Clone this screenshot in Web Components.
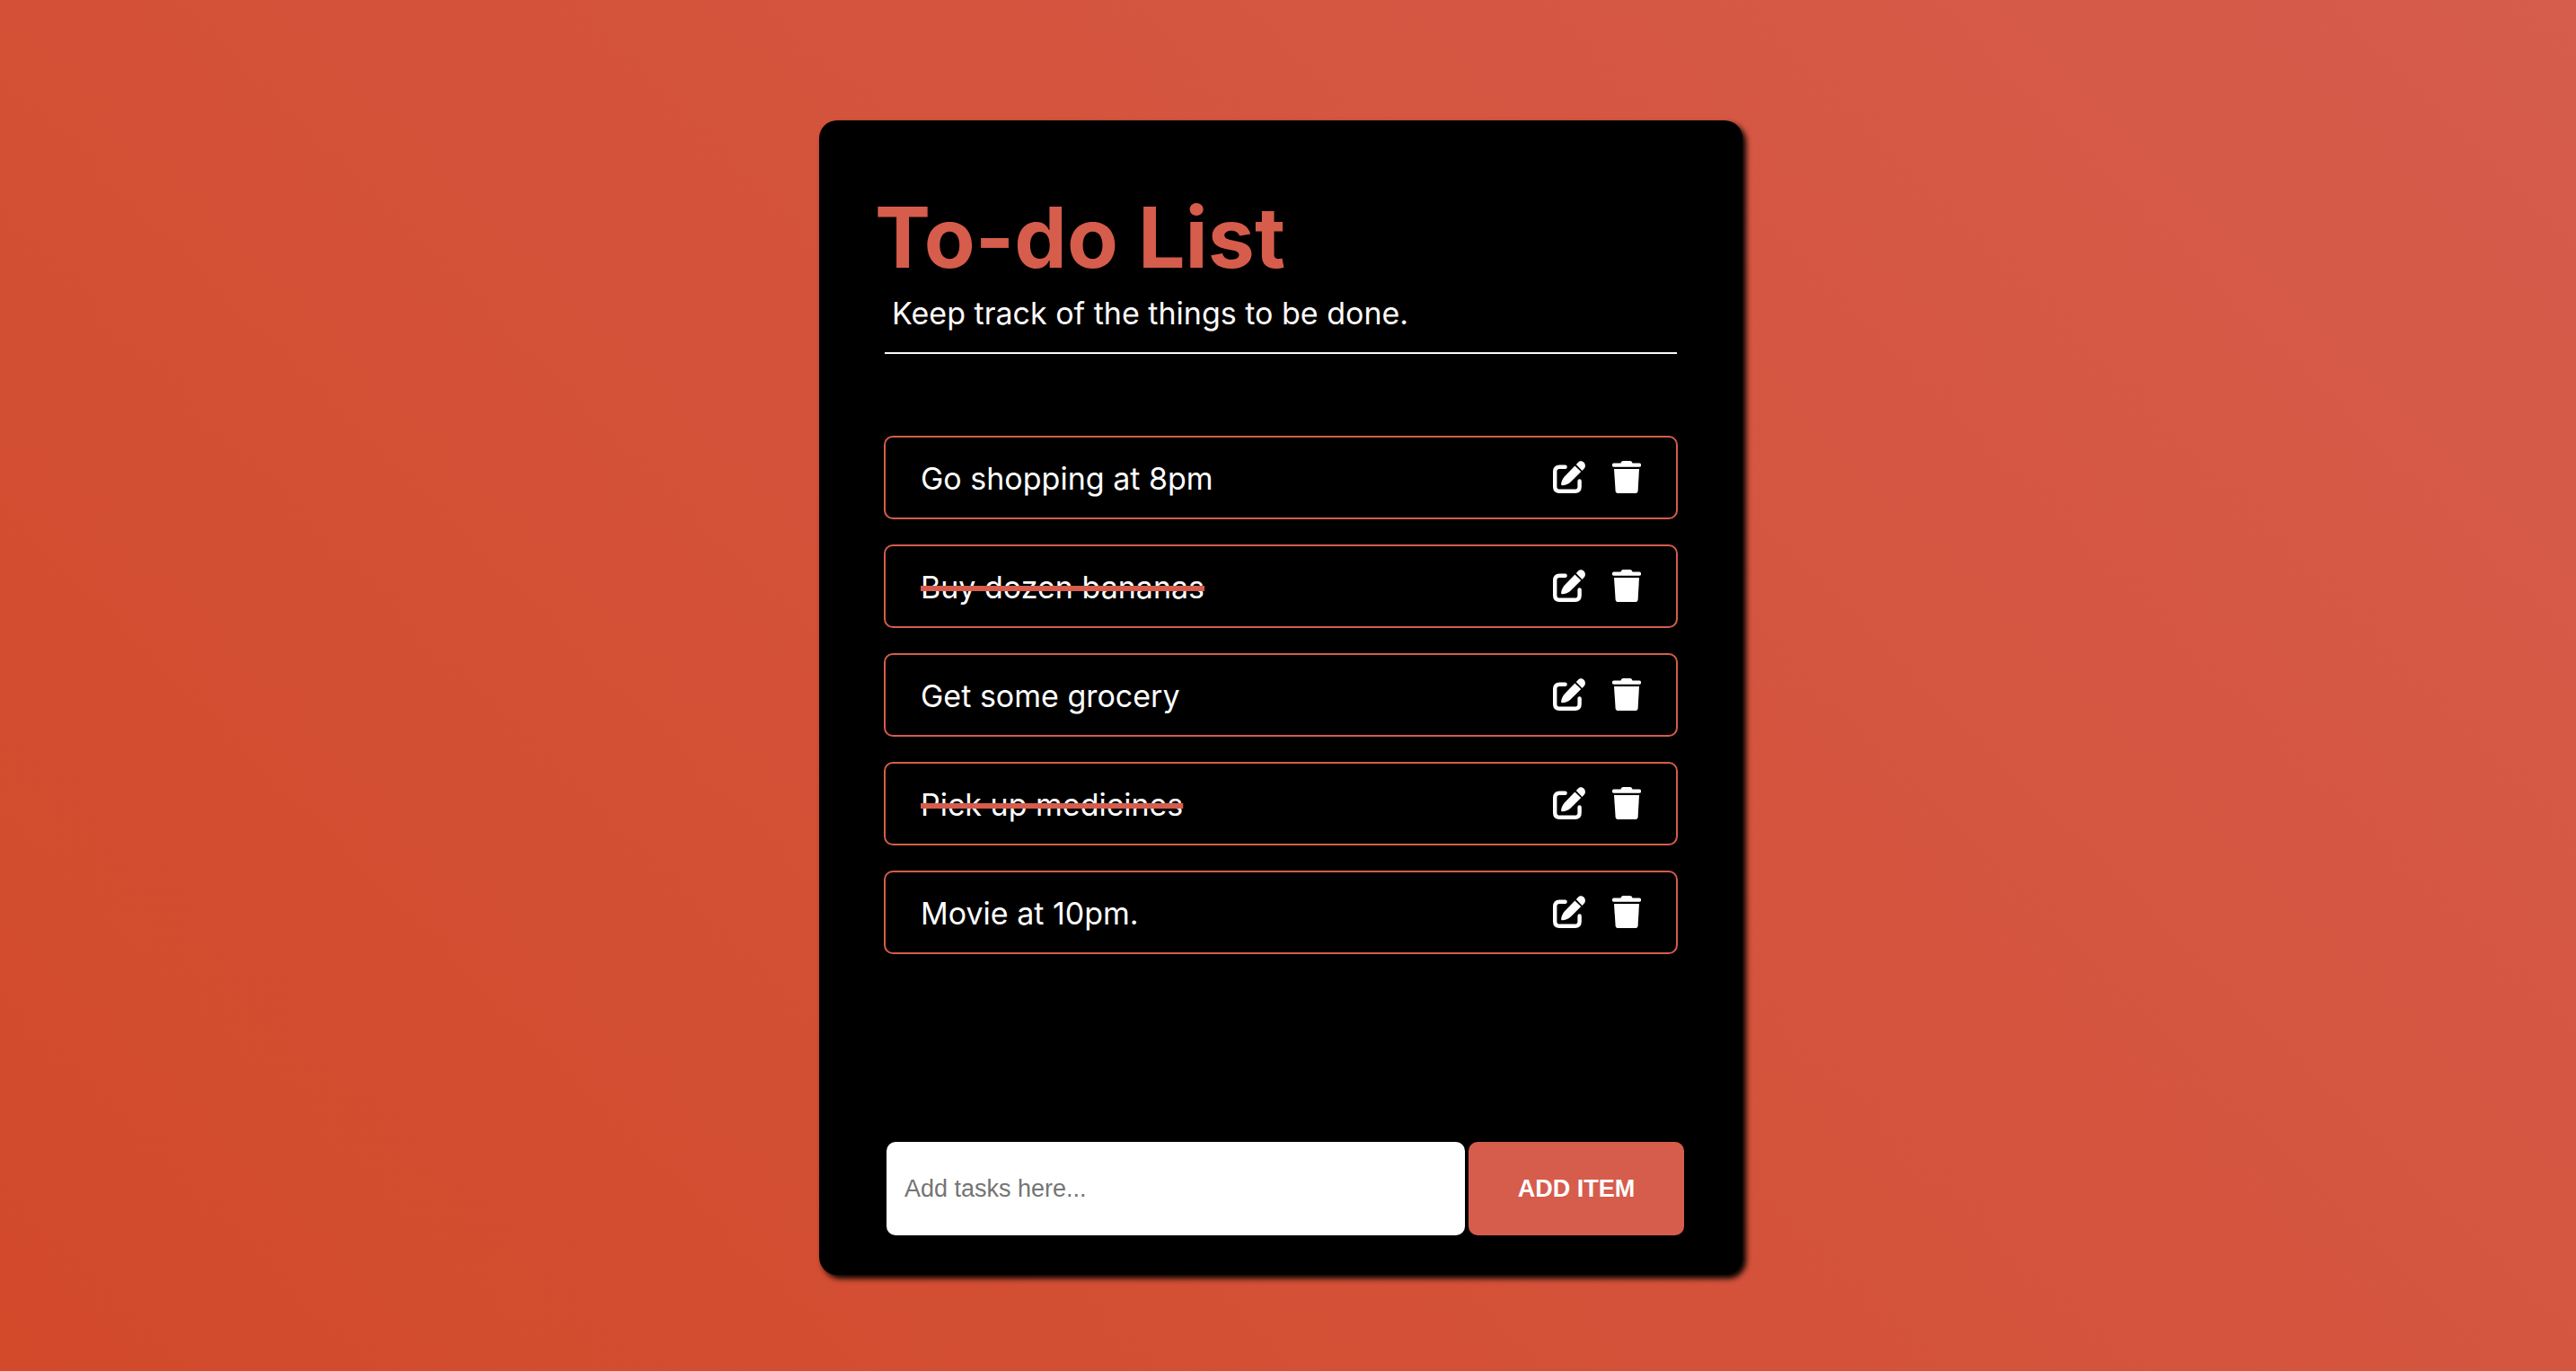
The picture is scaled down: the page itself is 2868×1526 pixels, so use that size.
<!DOCTYPE html>
<html lang="en">
<head>
<meta charset="utf-8">
<title>To-do List</title>
<style>
  html { height: 100%; }
  body {
    margin: 0;
    min-height: 100%;
    box-sizing: border-box;
    padding: 134px 16px 104px 0;
    background: linear-gradient(45deg, #d24a2a, #d65c4c);
    font-family: Inter, "Liberation Sans", sans-serif;
    --accent: #d65c4c;
    --light: #fffafa;
    --radius: 10px;
  }
</style>
</head>
<body>
<todo-card>
  <todo-header slot="header">
    <span slot="title">To-do List</span>
    <span slot="subtitle">Keep track of the things to be done.</span>
  </todo-header>
  <todo-item>Go shopping at 8pm</todo-item>
  <todo-item done>Buy dozen bananas</todo-item>
  <todo-item>Get some grocery</todo-item>
  <todo-item done>Pick up medicines</todo-item>
  <todo-item>Movie at 10pm.</todo-item>
  <todo-form slot="footer"></todo-form>
</todo-card>
<script>
const define = (name, html) => {
  const template = document.createElement('template');
  template.innerHTML = html;
  customElements.define(name, class extends HTMLElement {
    constructor() {
      super();
      this.attachShadow({ mode: 'open' }).append(template.content.cloneNode(true));
    }
  });
};

define('todo-card', `
  <style>
    :host {
      display: flex; flex-direction: column; box-sizing: border-box;
      max-width: 1028px; margin: 0 auto; padding: 72px 62px 44px;
      background: #000; border-radius: 20px;
      box-shadow: 4px 4px 6px #000;
    }
    .list { display: flex; flex-direction: column; gap: 28px; margin: 91px 10px 209px; }
  </style>
  <slot name="header"></slot>
  <div class="list" role="list"><slot></slot></div>
  <slot name="footer"></slot>
`);

define('todo-header', `
  <style>
    :host { display: block; }
    h1 { margin: 0; font-size: 93px; line-height: 116px; font-weight: 700; color: var(--accent); }
    p { margin: 0 11px; padding: 2px 8px 18px; font-size: 34px; line-height: 50px; color: var(--light); border-bottom: 2px solid var(--light); }
  </style>
  <h1><slot name="title"></slot></h1>
  <p><slot name="subtitle"></slot></p>
`);

define('todo-item', `
  <style>
    :host {
      display: flex; align-items: center; gap: 30px; box-sizing: border-box;
      min-height: 93px; padding: 0 39px;
      border: 2px solid var(--accent); border-radius: var(--radius);
      color: #fff; font-size: 34px; line-height: 48px;
    }
    .text { flex: 1; padding-top: 2px; }
    :host([done]) .text span { text-decoration: line-through 6px var(--accent); }
    button { display: flex; margin: 0; padding: 0 0 2px; border: 0; background: none; color: inherit; cursor: pointer; }
    svg { display: block; fill: currentColor; }
  </style>
  <div class="text"><span><slot></slot></span></div>
  <button type="button" aria-label="Edit">
    <svg width="36" height="36" viewBox="0 0 36 36">
      <path d="M13.6 6.8H7.2Q2.2 6.8 2.2 11.8V28.8Q2.2 33.8 7.2 33.8H24.6Q29.6 33.8 29.6 28.8V22.4" fill="none" stroke="currentColor" stroke-width="4.4" stroke-linecap="round"/>
      <path d="M9.3 27C8.6 25 10.4 20.4 12.8 17.6L24.4 5.4L31.2 12L19.4 23.8C16.4 26.4 11.6 27.8 9.3 27Z"/>
      <path d="M25.8 3.9L28 1.8C30 -.5 32.8 0 34.6 1.8C36.4 4 36.4 6.8 34.6 8.8L32.5 10.9Z"/>
    </svg>
  </button>
  <button type="button" aria-label="Delete">
    <svg width="32" height="36" viewBox="0 0 32 36">
      <path d="M9.5 2.5Q9.8 0 12 0H20Q22.2 0 22.5 2.5H30A2 2 0 0 1 30 6.8H2A2 2 0 0 1 2 2.5Z"/>
      <path d="M2 9H30L28.6 33.2Q28.4 36 25.6 36H6.6Q3.8 36 3.6 33.2Z"/>
    </svg>
  </button>
`);

define('todo-form', `
  <style>
    :host { display: block; }
    form { display: flex; gap: 4px; margin: 0 3px 0 13px; }
    input, button {
      box-sizing: border-box; height: 104px; margin: 0; border: 0; border-radius: var(--radius);
      font-family: "Liberation Sans", Arial, sans-serif; font-size: 27px;
    }
    input { flex: 1; min-width: 0; padding: 0 20px; background: #fff; color: #000; }
    input::placeholder { color: #757575; }
    button { width: 240px; padding: 0; background: var(--accent); color: #fff; font-weight: 700; cursor: pointer; }
  </style>
  <form onsubmit="return false">
    <input type="text" aria-label="New task" placeholder="Add tasks here...">
    <button type="submit">ADD ITEM</button>
  </form>
`);

document.querySelectorAll('todo-item').forEach(item => item.setAttribute('role', 'listitem'));
</script>
</body>
</html>
